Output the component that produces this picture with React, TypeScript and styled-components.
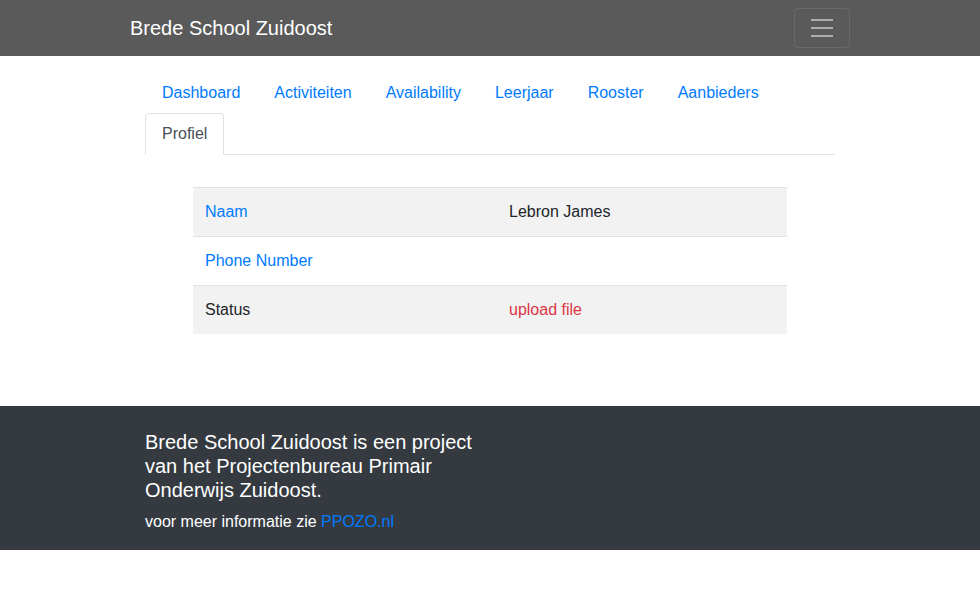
import React from "react";
import styled, { createGlobalStyle } from "styled-components";

const GlobalStyle = createGlobalStyle`
  *, *::before, *::after { box-sizing: border-box; }
  body {
    margin: 0;
    font-family: "Liberation Sans", Arial, Helvetica, sans-serif;
    font-size: 16px;
    line-height: 24px;
    color: #212529;
    background: #fff;
  }
`;

const Navbar = styled.nav`
  background: #5a5a5a;
  padding: 8px 0;
`;

const NavContainer = styled.div`
  width: 720px;
  margin: 0 auto;
  display: flex;
  align-items: center;
  justify-content: space-between;
`;

const Brand = styled.a`
  color: #fff;
  font-size: 20px;
  line-height: 30px;
  padding: 5px 0;
  text-decoration: none;
`;

const Toggler = styled.button`
  width: 56px;
  height: 40px;
  padding: 4px 12px;
  background: transparent;
  border: 1px solid rgba(255, 255, 255, 0.1);
  border-radius: 4px;
  display: flex;
  align-items: center;
  justify-content: center;
`;

const Container = styled.div`
  width: 720px;
  margin: 0 auto;
  padding: 0 15px;
`;

const Tabs = styled.ul`
  list-style: none;
  margin: 16px 0 0;
  padding: 0;
  display: flex;
  flex-wrap: wrap;
  border-bottom: 1px solid #dee2e6;
`;

const TabItem = styled.li`
  margin-bottom: -1px;
`;

const TabLink = styled.a<{ $active?: boolean }>`
  display: block;
  padding: 8px 16px;
  line-height: 24px;
  border: 1px solid transparent;
  border-top-left-radius: 4px;
  border-top-right-radius: 4px;
  text-decoration: none;
  color: ${(p) => (p.$active ? "#495057" : "#007bff")};
  background: ${(p) => (p.$active ? "#fff" : "transparent")};
  border-color: ${(p) => (p.$active ? "#dee2e6 #dee2e6 #fff" : "transparent")};
`;

const Table = styled.table`
  width: 594px;
  margin: 32px auto 72px;
  border-collapse: collapse;
`;

const Row = styled.tr<{ $striped?: boolean }>`
  background: ${(p) => (p.$striped ? "rgba(0,0,0,0.05)" : "transparent")};
`;

const Cell = styled.td<{ $first?: boolean }>`
  padding: 12px;
  line-height: 24px;
  border-top: 1px solid #dee2e6;
  vertical-align: top;
  width: ${(p) => (p.$first ? "304px" : "auto")};
`;

const Link = styled.a<{ $danger?: boolean }>`
  color: ${(p) => (p.$danger ? "#dc3545" : "#007bff")};
  text-decoration: none;
`;

const Footer = styled.footer`
  background: #343a40;
  color: #fff;
`;

const FooterInner = styled.div`
  width: 720px;
  margin: 0 auto;
  padding: 24px 15px 16px;
`;

const FooterCol = styled.div`
  width: 330px;
`;

const FooterHeading = styled.h5`
  font-size: 20px;
  line-height: 24px;
  font-weight: 500;
  margin: 0 0 8px;
`;

const FooterText = styled.p`
  margin: 0;
`;

const tabs = ["Dashboard", "Activiteiten", "Availability", "Leerjaar", "Rooster", "Aanbieders", "Profiel"];

export default function App() {
  return (
    <>
      <GlobalStyle />
      <Navbar>
        <NavContainer>
          <Brand href="#">Brede School Zuidoost</Brand>
          <Toggler aria-label="Toggle navigation">
            <svg width="30" height="30" viewBox="0 0 30 30">
              <path
                d="M4 7h22M4 15h22M4 23h22"
                stroke="rgba(255,255,255,0.5)"
                strokeWidth="2"
                strokeMiterlimit="10"
              />
            </svg>
          </Toggler>
        </NavContainer>
      </Navbar>
      <Container>
        <Tabs>
          {tabs.map((t) => (
            <TabItem key={t}>
              <TabLink href="#" $active={t === "Profiel"}>
                {t}
              </TabLink>
            </TabItem>
          ))}
        </Tabs>
        <Table>
          <tbody>
            <Row $striped>
              <Cell $first>
                <Link href="#">Naam</Link>
              </Cell>
              <Cell>Lebron James</Cell>
            </Row>
            <Row>
              <Cell $first>
                <Link href="#">Phone Number</Link>
              </Cell>
              <Cell></Cell>
            </Row>
            <Row $striped>
              <Cell $first>Status</Cell>
              <Cell>
                <Link href="#" $danger>
                  upload file
                </Link>
              </Cell>
            </Row>
          </tbody>
        </Table>
      </Container>
      <Footer>
        <FooterInner>
          <FooterCol>
            <FooterHeading>
              Brede School Zuidoost is een project van het Projectenbureau Primair Onderwijs Zuidoost.
            </FooterHeading>
            <FooterText>
              voor meer informatie zie <Link href="#">PPOZO.nl</Link>
            </FooterText>
          </FooterCol>
        </FooterInner>
      </Footer>
    </>
  );
}
